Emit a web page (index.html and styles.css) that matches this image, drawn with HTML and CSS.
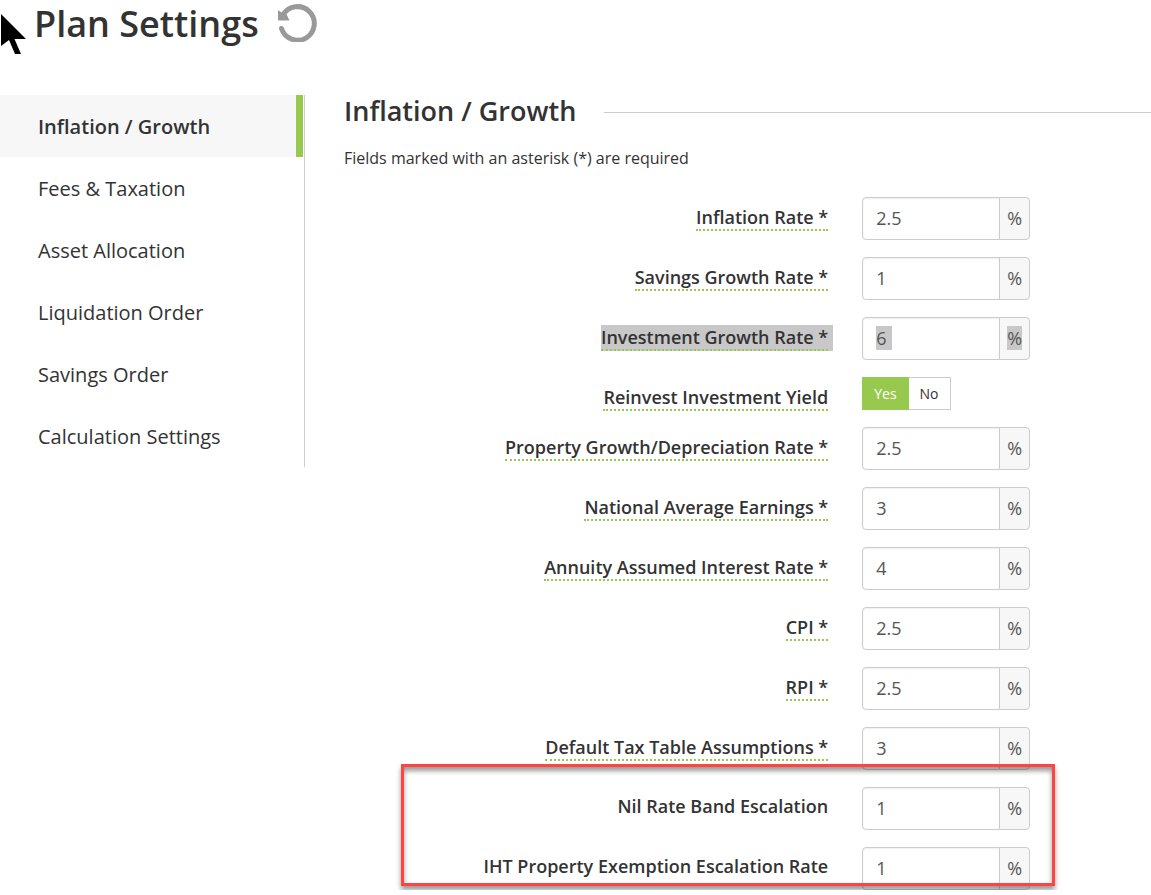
FILE: index.html
```html
<!DOCTYPE html>
<html lang="en">
<head>
<meta charset="utf-8">
<title>Plan Settings</title>
<link rel="stylesheet" href="styles.css">
</head>
<body>
<svg class="cursor" width="28" height="44" viewBox="0 0 28 44" aria-hidden="true"><path d="M1 1 L26 26 H14.500 L21 41 H15 L9 27 L1 33 Z"/></svg>
<header class="page-header">
  <h1 class="page-title">Plan Settings</h1>
  <button class="reset" type="button" aria-label="Reset settings">
    <svg width="40" height="40" viewBox="0 0 40 40" aria-hidden="true"><path class="reset-arc" d="M6 13 A16.800 16.800 0 1 1 4.500 26.500"/><path class="reset-head" d="M1 8 L4.500 10.500 L8 9 L12.500 18.500 H2 Q1 18.500 1 17.500 Z"/></svg>
  </button>
</header>
<div class="layout">
  <nav class="sidebar">
    <a class="nav-item active" href="#inflation">Inflation / Growth</a>
    <a class="nav-item" href="#fees">Fees &amp; Taxation</a>
    <a class="nav-item" href="#assets">Asset Allocation</a>
    <a class="nav-item" href="#liquidation">Liquidation Order</a>
    <a class="nav-item" href="#savings">Savings Order</a>
    <a class="nav-item" href="#calculation">Calculation Settings</a>
  </nav>
  <main class="content" id="inflation">
    <h2 class="section-title">Inflation / Growth</h2>
    <p class="note">Fields marked with an asterisk (*) are required</p>
    <form class="fields">
      <div class="row"><label class="label hint" for="f1">Inflation Rate *</label><div class="group"><input class="value" id="f1" value="2.5"><span class="unit">%</span></div></div>
      <div class="row"><label class="label hint" for="f2">Savings Growth Rate *</label><div class="group"><input class="value" id="f2" value="1"><span class="unit">%</span></div></div>
      <div class="row"><label class="label hint selected" for="f3">Investment Growth Rate *</label><div class="group"><input class="value value-selected" id="f3" value="6"><span class="unit"><span class="marked">%</span></span></div></div>
      <div class="row"><span class="label hint" id="reinvest">Reinvest Investment Yield</span><div class="toggle" role="group" aria-labelledby="reinvest"><button class="option on" type="button" aria-pressed="true">Yes</button><button class="option" type="button" aria-pressed="false">No</button></div></div>
      <div class="row"><label class="label hint" for="f5">Property Growth/Depreciation Rate *</label><div class="group"><input class="value" id="f5" value="2.5"><span class="unit">%</span></div></div>
      <div class="row"><label class="label hint" for="f6">National Average Earnings *</label><div class="group"><input class="value" id="f6" value="3"><span class="unit">%</span></div></div>
      <div class="row"><label class="label hint" for="f7">Annuity Assumed Interest Rate *</label><div class="group"><input class="value" id="f7" value="4"><span class="unit">%</span></div></div>
      <div class="row"><label class="label hint" for="f8">CPI *</label><div class="group"><input class="value" id="f8" value="2.5"><span class="unit">%</span></div></div>
      <div class="row"><label class="label hint" for="f9">RPI *</label><div class="group"><input class="value" id="f9" value="2.5"><span class="unit">%</span></div></div>
      <div class="row"><label class="label hint" for="f10">Default Tax Table Assumptions *</label><div class="group"><input class="value" id="f10" value="3"><span class="unit">%</span></div></div>
      <div class="callout">
        <div class="row"><label class="label" for="f11">Nil Rate Band Escalation</label><div class="group"><input class="value" id="f11" value="1"><span class="unit">%</span></div></div>
        <div class="row"><label class="label" for="f12">IHT Property Exemption Escalation Rate</label><div class="group"><input class="value" id="f12" value="1"><span class="unit">%</span></div></div>
      </div>
    </form>
  </main>
</div>
</body>
</html>
```
FILE: styles.css
```css
* { box-sizing: border-box; }

body {
  margin: 0;
  background: #fff;
  color: #333;
  font-family: "Open Sans", sans-serif;
  font-size: 18px;
}

.cursor { position: absolute; left: 0; top: 13px; }

.page-header {
  display: flex;
  align-items: center;
  gap: 18px;
  height: 48px;
  margin-bottom: 47px;
  padding-left: 34px;
}

.page-title { margin: 0; font-size: 36px; font-weight: 600; line-height: 48px; }

.reset { height: 48px; padding: 0 0 4px; border: 0; background: none; }
.reset svg { display: block; }
.reset-arc { fill: none; stroke: #999; stroke-width: 5; stroke-linecap: round; }
.reset-head { fill: #999; }

.layout { display: flex; align-items: flex-start; gap: 39px; }

.sidebar {
  flex: none;
  width: 305px;
  padding-right: 1px;
  border-right: 1px solid #ccc;
}

.nav-item {
  display: block;
  padding: 1px 30px 0 38px;
  color: #333;
  font-size: 20px;
  line-height: 61px;
  text-decoration: none;
}

.nav-item.active {
  border-right: 7px solid #97c94f;
  background: #f7f7f7;
  font-weight: 600;
}

.content { flex: 1; min-width: 0; }

.section-title {
  display: flex;
  align-items: center;
  gap: 28px;
  margin: 0;
  font-size: 27px;
  font-weight: 600;
  line-height: 31px;
}

.section-title::after { content: ""; flex: 1; height: 1px; margin-top: 4px; background: #ccc; }

.note { margin: 20px 0 27px; font-size: 16px; line-height: 24px; }

.fields { display: grid; gap: 17px; }

.row {
  display: grid;
  grid-template-columns: 60% 168px;
  gap: 34px;
  align-items: start;
}

.label {
  justify-self: end;
  margin-top: 7px;
  font-weight: 600;
  line-height: 25px;
  white-space: nowrap;
}

.hint { height: 26px; margin: 8px 0 -1px; border-bottom: 2px dotted #97c94f; }
.selected { background: #c8c8c8; box-shadow: 5px 0 #c8c8c8; }

.group { display: flex; height: 43px; }

.value {
  flex: 1;
  min-width: 0;
  padding: 0 13px 1px;
  border: 1px solid #ccc;
  border-radius: 4px 0 0 4px;
  background: #fff;
  box-shadow: inset 0 1px 2px #0001;
  color: #555;
  font: inherit;
}

.value-selected {
  background: linear-gradient(#c8c8c8, #c8c8c8) 13px 8px / 16px 24px no-repeat;
}

.unit {
  display: flex;
  align-items: center;
  justify-content: center;
  width: 31px;
  margin-left: -1px;
  padding-bottom: 1px;
  border: 1px solid #ccc;
  border-radius: 0 4px 4px 0;
  background: #f7f7f7;
  color: #555;
}

.marked { background: #c8c8c8; }

.toggle { display: flex; height: 33px; }

.option {
  padding: 0 11px;
  border: 1px solid #ccc;
  border-left: 0;
  background: #fff;
  color: #333;
  font: inherit;
  font-size: 14px;
}

.option.on { border: 1px solid #97c94f; background: #97c94f; color: #fff; }

.callout { position: relative; display: grid; gap: 17px; }

.callout::after {
  content: "";
  position: absolute;
  inset: -23px 96px 4px 57px;
  border: 3px solid #ff4444;
  box-shadow: 0 4px 5px #0006, inset 0 4px 5px #0006;
  pointer-events: none;
}
```
